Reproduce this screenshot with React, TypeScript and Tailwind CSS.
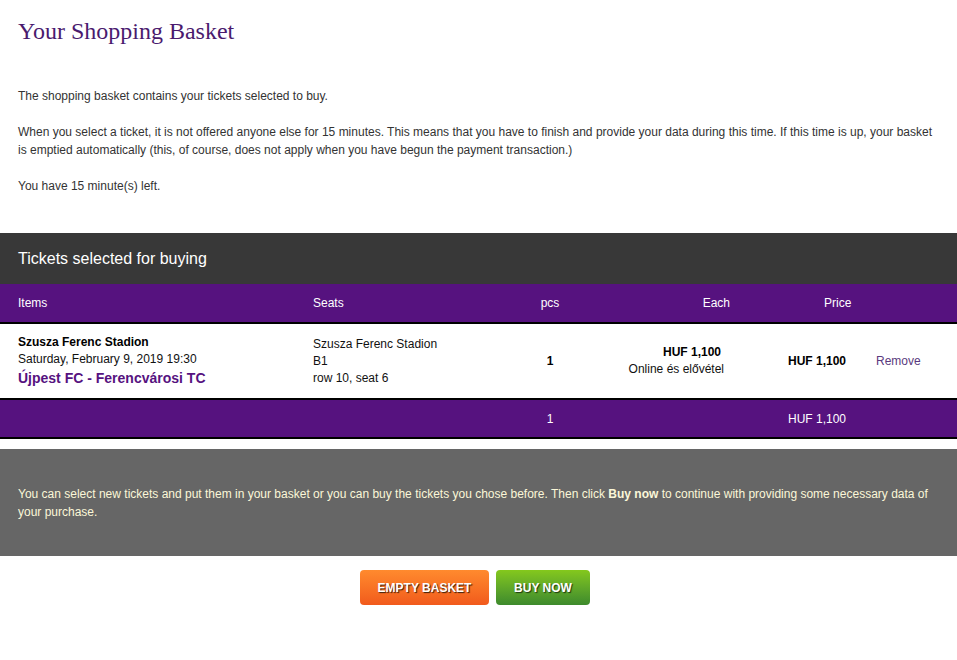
import React from "react"

const ticket = {
  venue: "Szusza Ferenc Stadion",
  date: "Saturday, February 9, 2019 19:30",
  match: "Újpest FC - Ferencvárosi TC",
  sector: "B1",
  seat: "row 10, seat 6",
  pcs: 1,
  price: "HUF 1,100",
  priceType: "Online és elővétel",
}

// shared column layout for header, item rows and totals
const cols = "grid grid-cols-[313px_187px_100px_130px_146px_1fr] items-center"

export default function App() {
  return (
    <div className="min-h-[660px] bg-white font-['Liberation_Sans',Arial,sans-serif] text-[12px] text-[#333]">
      <h1 className="px-[18px] pt-[16px] font-['Liberation_Serif',Georgia,serif] text-[24px] leading-[30px] text-[#4a1a6e]">
        Your Shopping Basket
      </h1>

      <div className="px-[18px] pt-[41px] leading-[18px] space-y-[18px]">
        <p>The shopping basket contains your tickets selected to buy.</p>
        <p>
          When you select a ticket, it is not offered anyone else for 15 minutes. This means that you have to finish
          and provide your data during this time. If this time is up, your basket is emptied automatically (this, of
          course, does not apply when you have begun the payment transaction.)
        </p>
        <p>You have 15 minute(s) left.</p>
      </div>

      {/* basket table */}
      <div className="mt-[38px]">
        <div className="h-[51px] flex items-center px-[18px] bg-[#383838] text-white text-[16px]">
          Tickets selected for buying
        </div>

        <div className={`${cols} h-[40px] bg-[#56127f] text-white border-b-[2px] border-black`}>
          <div className="pl-[18px]">Items</div>
          <div>Seats</div>
          <div className="text-center">pcs</div>
          <div className="text-right">Each</div>
          <div className="pl-[94px]">Price</div>
          <div />
        </div>

        <div className={`${cols} h-[76px] border-b-[2px] border-black text-[#111]`}>
          <div className="pl-[18px] leading-[17px]">
            <div className="font-bold text-black">{ticket.venue}</div>
            <div>{ticket.date}</div>
            <div className="font-bold text-[14px] leading-[20px] text-[#56127f]">{ticket.match}</div>
          </div>
          <div className="leading-[17px]">
            <div>{ticket.venue}</div>
            <div>{ticket.sector}</div>
            <div>{ticket.seat}</div>
          </div>
          <div className="text-center font-bold text-black">{ticket.pcs}</div>
          <div className="flex flex-col items-end pr-[6px] leading-[17px]">
            <div className="font-bold text-black pr-[3px]">{ticket.price}</div>
            <div>{ticket.priceType}</div>
          </div>
          <div className="pl-[58px] font-bold text-black">{ticket.price}</div>
          <div>
            <a href="#" className="text-[#5a3a7e]">Remove</a>
          </div>
        </div>

        <div className={`${cols} h-[39px] bg-[#56127f] text-white border-b-[2px] border-black`}>
          <div />
          <div />
          <div className="text-center">{ticket.pcs}</div>
          <div />
          <div className="pl-[58px]">{ticket.price}</div>
          <div />
        </div>
      </div>

      <div className="mt-[10px] h-[107px] flex items-center px-[18px] bg-[#666] text-[#fbf7d8] leading-[18px]">
        <p>
          You can select new tickets and put them in your basket or you can buy the tickets you chose before. Then
          click <b>Buy now</b> to continue with providing some necessary data of your purchase.
        </p>
      </div>

      <div className="mt-[14px] flex justify-center gap-[7px] pr-[7px]">
        <button className="h-[35px] w-[129px] rounded-[4px] bg-gradient-to-b from-[#ff8a2e] to-[#f15a1c] text-white font-bold text-[12px] uppercase [text-shadow:1px_1px_1px_#3a1d0a]">
          Empty basket
        </button>
        <button className="h-[35px] w-[94px] rounded-[4px] bg-gradient-to-b from-[#84c81c] to-[#3d8a2c] text-white font-bold text-[12px] uppercase [text-shadow:1px_1px_1px_#1c3a10]">
          Buy now
        </button>
      </div>
    </div>
  )
}
